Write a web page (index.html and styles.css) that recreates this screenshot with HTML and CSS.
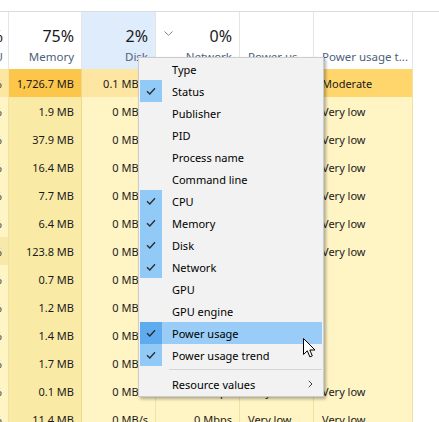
FILE: index.html
```html
<!DOCTYPE html>
<html>
<head>
<meta charset="utf-8">
<link rel="stylesheet" href="styles.css">
</head>
<body>
<div class="page">
  <div class="topband"></div>
  <div class="grid">
    <div class="hcell c0"><div class="hval"><span class="cut">%</span></div><div class="hlab"><span class="cut">U</span></div></div>
    <div class="hcell c1"><div class="hval">75%</div><div class="hlab">Memory</div></div>
    <div class="hcell c2 sel"><div class="hval">2%</div><div class="hlab">Disk</div></div>
    <div class="hcell c3"><div class="hval split"><svg class="chev" viewBox="0 0 9 5" width="9" height="5"><path d="M0.5 0.5 L4.5 4.3 L8.5 0.5" fill="none" stroke="#7d8796" stroke-width="1"/></svg><span>0%</span></div><div class="hlab">Network</div></div>
    <div class="hcell c4 left"><div class="hval"></div><div class="hlab">Power us...</div></div>
    <div class="hcell c5 left"><div class="hval"></div><div class="hlab">Power usage t...</div></div>

    <div class="cell c0 hi"><span class="cut">%</span></div><div class="cell c1 mem hi1">1,726.7 MB</div><div class="cell c2 hi">0.1 MB/s</div><div class="cell c3 hi">0 Mbps</div><div class="cell c4 left hi2">Moderate</div><div class="cell c5 left hi2">Moderate</div>

    <div class="cell c0"><span class="cut">%</span></div><div class="cell c1 mem">1.9 MB</div><div class="cell c2">0 MB/s</div><div class="cell c3">0 Mbps</div><div class="cell c4 left">Very low</div><div class="cell c5 left">Very low</div>

    <div class="cell c0"><span class="cut">%</span></div><div class="cell c1 mem">37.9 MB</div><div class="cell c2">0 MB/s</div><div class="cell c3">0 Mbps</div><div class="cell c4 left">Very low</div><div class="cell c5 left">Very low</div>

    <div class="cell c0"><span class="cut">%</span></div><div class="cell c1 mem">16.4 MB</div><div class="cell c2">0 MB/s</div><div class="cell c3">0 Mbps</div><div class="cell c4 left">Very low</div><div class="cell c5 left">Very low</div>

    <div class="cell c0"><span class="cut">%</span></div><div class="cell c1 mem">7.7 MB</div><div class="cell c2">0 MB/s</div><div class="cell c3">0 Mbps</div><div class="cell c4 left">Very low</div><div class="cell c5 left">Very low</div>

    <div class="cell c0"><span class="cut">%</span></div><div class="cell c1 mem">6.4 MB</div><div class="cell c2">0 MB/s</div><div class="cell c3">0 Mbps</div><div class="cell c4 left">Very low</div><div class="cell c5 left">Very low</div>

    <div class="cell c0 dk"><span class="cut">%</span></div><div class="cell c1 mem">123.8 MB</div><div class="cell c2">0 MB/s</div><div class="cell c3">0 Mbps</div><div class="cell c4 left">Very low</div><div class="cell c5 left">Very low</div>

    <div class="cell c0"><span class="cut">%</span></div><div class="cell c1 mem">0.7 MB</div><div class="cell c2">0 MB/s</div><div class="cell c3">0 Mbps</div><div class="cell c4 left"></div><div class="cell c5 left"></div>

    <div class="cell c0"><span class="cut">%</span></div><div class="cell c1 mem">1.2 MB</div><div class="cell c2">0 MB/s</div><div class="cell c3">0 Mbps</div><div class="cell c4 left"></div><div class="cell c5 left"></div>

    <div class="cell c0"><span class="cut">%</span></div><div class="cell c1 mem">1.4 MB</div><div class="cell c2">0 MB/s</div><div class="cell c3">0 Mbps</div><div class="cell c4 left"></div><div class="cell c5 left"></div>

    <div class="cell c0"><span class="cut">%</span></div><div class="cell c1 mem">1.7 MB</div><div class="cell c2">0 MB/s</div><div class="cell c3">0 Mbps</div><div class="cell c4 left"></div><div class="cell c5 left"></div>

    <div class="cell c0"><span class="cut">%</span></div><div class="cell c1 mem">0.1 MB</div><div class="cell c2">0 MB/s</div><div class="cell c3">0 Mbps</div><div class="cell c4 left">Very low</div><div class="cell c5 left">Very low</div>

    <div class="cell c0"><span class="cut">%</span></div><div class="cell c1 mem">11.4 MB</div><div class="cell c2">0 MB/s</div><div class="cell c3">0 Mbps</div><div class="cell c4 left">Very low</div><div class="cell c5 left">Very low</div>
  </div>

  <div class="menu">
    <div class="item"><span class="chk"></span><span class="lbl">Type</span></div>
    <div class="item"><span class="chk on"><svg viewBox="0 0 10 8" width="10" height="8"><path d="M1 4.2 L3.8 7 L9 1.2" fill="none" stroke="#2b2b2b" stroke-width="1.3"/></svg></span><span class="lbl">Status</span></div>
    <div class="item"><span class="chk"></span><span class="lbl">Publisher</span></div>
    <div class="item"><span class="chk"></span><span class="lbl">PID</span></div>
    <div class="item"><span class="chk"></span><span class="lbl">Process name</span></div>
    <div class="item"><span class="chk"></span><span class="lbl">Command line</span></div>
    <div class="item"><span class="chk on"><svg viewBox="0 0 10 8" width="10" height="8"><path d="M1 4.2 L3.8 7 L9 1.2" fill="none" stroke="#2b2b2b" stroke-width="1.3"/></svg></span><span class="lbl">CPU</span></div>
    <div class="item"><span class="chk on"><svg viewBox="0 0 10 8" width="10" height="8"><path d="M1 4.2 L3.8 7 L9 1.2" fill="none" stroke="#2b2b2b" stroke-width="1.3"/></svg></span><span class="lbl">Memory</span></div>
    <div class="item"><span class="chk on"><svg viewBox="0 0 10 8" width="10" height="8"><path d="M1 4.2 L3.8 7 L9 1.2" fill="none" stroke="#2b2b2b" stroke-width="1.3"/></svg></span><span class="lbl">Disk</span></div>
    <div class="item"><span class="chk on"><svg viewBox="0 0 10 8" width="10" height="8"><path d="M1 4.2 L3.8 7 L9 1.2" fill="none" stroke="#2b2b2b" stroke-width="1.3"/></svg></span><span class="lbl">Network</span></div>
    <div class="item"><span class="chk"></span><span class="lbl">GPU</span></div>
    <div class="item"><span class="chk"></span><span class="lbl">GPU engine</span></div>
    <div class="item hover"><span class="chk on"><svg viewBox="0 0 10 8" width="10" height="8"><path d="M1 4.2 L3.8 7 L9 1.2" fill="none" stroke="#2b2b2b" stroke-width="1.3"/></svg></span><span class="lbl">Power usage</span></div>
    <div class="item"><span class="chk on"><svg viewBox="0 0 10 8" width="10" height="8"><path d="M1 4.2 L3.8 7 L9 1.2" fill="none" stroke="#2b2b2b" stroke-width="1.3"/></svg></span><span class="lbl">Power usage trend</span></div>
    <div class="sep"></div>
    <div class="item sub"><span class="chk"></span><span class="lbl">Resource values</span><svg class="arr" viewBox="0 0 5 8" width="5" height="8"><path d="M0.8 0.8 L4 4 L0.8 7.2" fill="none" stroke="#444" stroke-width="1"/></svg></div>
  </div>

  <svg class="cursor" viewBox="0 0 13 21" width="13" height="21"><path d="M0.5 0.5 L0.5 16.5 L4.3 12.8 L6.9 18.9 L9.3 17.9 L6.8 12 L12 12 Z" fill="#fff" stroke="#000" stroke-width="1" stroke-linejoin="miter"/></svg>
</div>
</body>
</html>
```

FILE: styles.css
```css
html, body {
  margin: 0;
  padding: 0;
  background: #ffffff;
}
.page {
  position: relative;
  width: 439px;
  height: 422px;
  overflow: hidden;
  font-family: "Noto Sans", "Open Sans", sans-serif;
  font-size: 11px;
  color: #1a1a1a;
}
.topband {
  height: 11px;
  border-bottom: 1px solid #dcdcdc;
}
.grid {
  display: grid;
  grid-template-columns: 9px 73px 74px 84px 74px 99px;
  grid-template-rows: 57px;
  grid-auto-rows: 28px;
  width: 413px;
}
.hcell {
  display: flex;
  flex-direction: column;
  border-right: 1px solid #e5e5e5;
  overflow: hidden;
  background: #ffffff;
}
.hcell.sel { background: #deecfb; }
.hval {
  height: 34px;
  display: flex;
  align-items: flex-end;
  justify-content: flex-end;
  padding-right: 7px;
  font-size: 16px;
  color: #1a1a1a;
  line-height: 20px;
  box-sizing: border-box;
}
.hval.split { justify-content: space-between; padding-left: 8px; }
.chev {
  align-self: flex-start;
  margin-top: 19px;
}
.hlab {
  height: 21px;
  display: flex;
  align-items: center;
  justify-content: flex-end;
  padding-right: 7px;
  color: #4c607a;
  white-space: nowrap;
  font-size: 11.5px;
}
.hcell.left .hlab { justify-content: flex-start; padding-left: 8px; }
.hcell.c0 .hval, .hcell.c0 .hlab { padding-right: 5px; }

.cell {
  display: flex;
  align-items: center;
  justify-content: flex-end;
  padding-right: 7px;
  background: #fff4c4;
  border-right: 1px solid #f0e2a4;
  white-space: nowrap;
  overflow: hidden;
}
.cell.left { justify-content: flex-start; padding-left: 8px; padding-right: 0; }
.cell.mem { background: #f9eaa6; border-right-color: #ecd98c; }
.cell.c0 { padding-right: 6px; }
.cell.dk { background: #f7e9a9; }
.cell.hi1 { background: #fcc64a; }
.cell.hi { background: #fde6a2; }
.cell.hi2 { background: #ffd66c; }

.menu {
  position: absolute;
  left: 138px;
  top: 57px;
  width: 186px;
  height: 340px;
  box-sizing: border-box;
  border: 1px solid #cccccc;
  background: #f2f2f2;
  box-shadow: 2px 2px 3px rgba(0,0,0,0.3);
  padding: 0 1px;
  font-size: 11px;
  color: #000;
}
.item {
  height: 22px;
  display: flex;
  align-items: center;
  position: relative;
}
.chk {
  width: 22px;
  height: 22px;
  display: flex;
  align-items: center;
  justify-content: center;
  margin-right: 10px;
  flex: none;
}
.chk.on { background: #91c9f7; }
.item.hover { background: #99cdf7; }
.item.hover .chk.on { background: #5eabef; }
.lbl { white-space: nowrap; }
.sep {
  height: 1px;
  background: #d4d4d4;
  margin: 3px 0 3px 29px;
}
.item.sub .arr { margin-left: auto; margin-right: 9px; }
.cursor {
  position: absolute;
  left: 303px;
  top: 338px;
}
.cut { display: inline-block; }
```
